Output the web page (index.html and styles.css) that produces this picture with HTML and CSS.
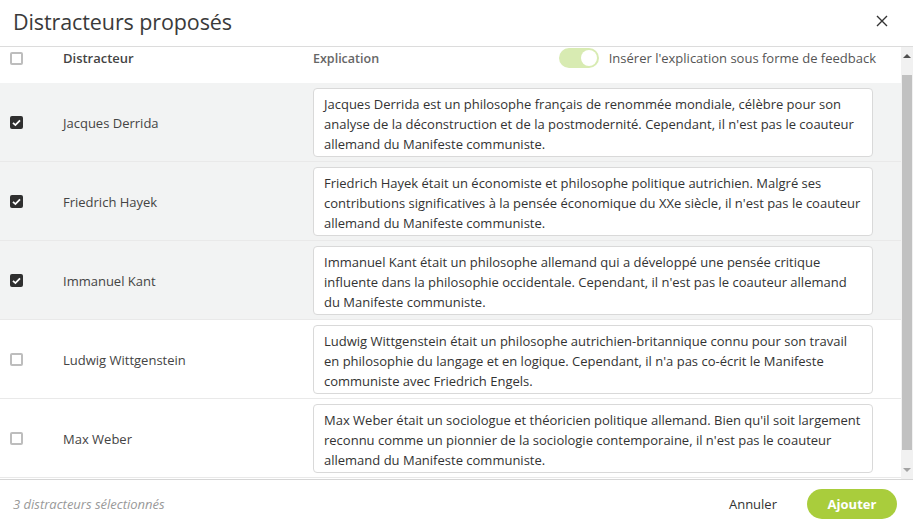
FILE: index.html
```html
<!DOCTYPE html>
<html lang="fr">
<head>
<meta charset="utf-8">
<title>Distracteurs proposés</title>
<link rel="stylesheet" href="styles.css">
</head>
<body>
<div class="modal">
  <div class="modal-header">
    <h1 class="title">Distracteurs proposés</h1>
    <button class="close" aria-label="Fermer">
      <svg width="12" height="12" viewBox="0 0 12 12"><path d="M1 1L11 11M11 1L1 11" stroke="#333" stroke-width="1.4" fill="none"/></svg>
    </button>
  </div>
  <div class="modal-body">
    <div class="list">
      <div class="list-head">
        <div class="cell-check"><span class="cb"></span></div>
        <div class="cell-name head-label">Distracteur</div>
        <div class="cell-expl head-expl">
          <span class="head-label">Explication</span>
          <label class="toggle-wrap"><span class="toggle"><span class="knob"></span></span><span class="toggle-text">Insérer l'explication sous forme de feedback</span></label>
        </div>
      </div>

      <div class="row selected">
        <div class="cell-check"><span class="cb checked"><svg viewBox="0 0 13 13" width="13" height="13"><path d="M3 6.8L5.4 9.1L10 4.3" stroke="#fff" stroke-width="1.8" fill="none"/></svg></span></div>
        <div class="cell-name">Jacques Derrida</div>
        <div class="cell-expl"><div class="explain">Jacques Derrida est un philosophe français de renommée mondiale, célèbre pour son<br>analyse de la déconstruction et de la postmodernité. Cependant, il n'est pas le coauteur<br>allemand du Manifeste communiste.</div></div>
      </div>

      <div class="row selected">
        <div class="cell-check"><span class="cb checked"><svg viewBox="0 0 13 13" width="13" height="13"><path d="M3 6.8L5.4 9.1L10 4.3" stroke="#fff" stroke-width="1.8" fill="none"/></svg></span></div>
        <div class="cell-name">Friedrich Hayek</div>
        <div class="cell-expl"><div class="explain">Friedrich Hayek était un économiste et philosophe politique autrichien. Malgré ses<br>contributions significatives à la pensée économique du XXe siècle, il n'est pas le coauteur<br>allemand du Manifeste communiste.</div></div>
      </div>

      <div class="row selected">
        <div class="cell-check"><span class="cb checked"><svg viewBox="0 0 13 13" width="13" height="13"><path d="M3 6.8L5.4 9.1L10 4.3" stroke="#fff" stroke-width="1.8" fill="none"/></svg></span></div>
        <div class="cell-name">Immanuel Kant</div>
        <div class="cell-expl"><div class="explain">Immanuel Kant était un philosophe allemand qui a développé une pensée critique<br>influente dans la philosophie occidentale. Cependant, il n'est pas le coauteur allemand<br>du Manifeste communiste.</div></div>
      </div>

      <div class="row">
        <div class="cell-check"><span class="cb"></span></div>
        <div class="cell-name">Ludwig Wittgenstein</div>
        <div class="cell-expl"><div class="explain">Ludwig Wittgenstein était un philosophe autrichien-britannique connu pour son travail<br>en philosophie du langage et en logique. Cependant, il n'a pas co-écrit le Manifeste<br>communiste avec Friedrich Engels.</div></div>
      </div>

      <div class="row">
        <div class="cell-check"><span class="cb"></span></div>
        <div class="cell-name">Max Weber</div>
        <div class="cell-expl"><div class="explain">Max Weber était un sociologue et théoricien politique allemand. Bien qu'il soit largement<br>reconnu comme un pionnier de la sociologie contemporaine, il n'est pas le coauteur<br>allemand du Manifeste communiste.</div></div>
      </div>
    </div>
    <div class="scrollbar">
      <div class="arrow up"></div>
      <div class="track"><div class="thumb"></div></div>
      <div class="arrow down"></div>
    </div>
  </div>
  <div class="modal-footer">
    <span class="count">3 distracteurs sélectionnés</span>
    <div class="actions">
      <button class="btn-cancel">Annuler</button>
      <button class="btn-add">Ajouter</button>
    </div>
  </div>
</div>
</body>
</html>
```

FILE: styles.css
```css
* { box-sizing: border-box; }
html, body { margin: 0; padding: 0; background: #fff; }
body {
  font-family: "Open Sans", "Noto Sans", sans-serif;
  color: #333;
  width: 913px;
  height: 528px;
  overflow: hidden;
}
.modal { width: 913px; height: 528px; display: flex; flex-direction: column; }

.modal-header {
  height: 47px;
  flex: none;
  display: flex;
  align-items: center;
  justify-content: space-between;
  padding: 0 24px 4px 13px;
  border-bottom: 1px solid #dcdcdc;
}
.title {
  margin: 0;
  font-size: 21.5px;
  font-weight: 400;
  color: #3a3a3a;
  letter-spacing: -0.1px;
}
.close {
  border: 0;
  background: none;
  padding: 0;
  width: 14px;
  height: 14px;
  display: flex;
  align-items: center;
  justify-content: center;
  cursor: pointer;
}

.modal-body { height: 432px; flex: none; display: flex; overflow: hidden; }
.list { flex: 1; overflow: hidden; }

.list-head {
  height: 36px;
  display: flex;
  align-items: flex-start;
  padding-top: 0;
}
.list-head > div { height: 22px; display: flex; align-items: center; }
.head-label { font-size: 12.5px; font-weight: 600; color: #666; }
.head-expl { justify-content: space-between; padding-right: 25px; }

.cell-check { width: 63px; flex: none; padding-left: 10px; display: flex; align-items: center; }
.cell-name { width: 250px; flex: none; font-size: 13px; color: #444; }
.cell-expl { flex: 1; min-width: 0; }

.cb {
  width: 13px;
  height: 13px;
  border: 2px solid #bdbdbd;
  border-radius: 2px;
  background: #fff;
  display: block;
}
.cb.checked { border: 0; background: #2f2f2f; }
.cb svg { display: block; }

.toggle-wrap { display: flex; align-items: center; gap: 10px; }
.toggle {
  width: 40px;
  height: 20px;
  border-radius: 10px;
  background: #d8ebb2;
  position: relative;
  display: block;
}
.knob {
  position: absolute;
  right: 2px;
  top: 2px;
  width: 16px;
  height: 16px;
  border-radius: 50%;
  background: #fff;
}
.toggle-text { font-size: 13px; color: #555; }

.row {
  height: 79px;
  display: flex;
  align-items: center;
  border-bottom: 1px solid #e9e9e9;
  padding: 1px 0 0;
}
.row.selected { background: #f2f3f3; }

.explain {
  width: 560px;
  height: 69px;
  background: #fff;
  border: 1px solid #d9d9d9;
  border-radius: 4px;
  padding: 5px 10px;
  font-size: 13px;
  line-height: 20px;
  color: #333;
  white-space: nowrap;
  overflow: hidden;
}

.scrollbar {
  width: 12px;
  flex: none;
  background: #f1f1f1;
  display: flex;
  flex-direction: column;
}
.arrow { height: 17px; flex: none; position: relative; }
.arrow::after {
  content: "";
  position: absolute;
  left: 2px;
  border-left: 4px solid transparent;
  border-right: 4px solid transparent;
}
.arrow.up::after { top: 7px; border-bottom: 4px solid #505050; }
.arrow.down::after { top: 6px; border-top: 4px solid #a3a3a3; }
.track { flex: 1; padding: 11px 0 0 1px; }
.thumb { height: 375px; width: 10px; background: #c1c1c1; }

.modal-footer {
  flex: 1;
  display: flex;
  align-items: center;
  justify-content: space-between;
  border-top: 1px solid #d6d6d6;
  padding: 0 16px 0 13px;
}
.count { font-size: 13px; font-style: italic; color: #999; }
.actions { display: flex; align-items: center; gap: 30px; }
.btn-cancel {
  border: 0;
  background: none;
  padding: 0;
  font-family: inherit;
  font-size: 13px;
  color: #333;
}
.btn-add {
  border: 0;
  width: 90px;
  height: 30px;
  border-radius: 15px;
  background: #a9cd3c;
  color: #fff;
  font-family: inherit;
  font-size: 13px;
  font-weight: 700;
}
```
